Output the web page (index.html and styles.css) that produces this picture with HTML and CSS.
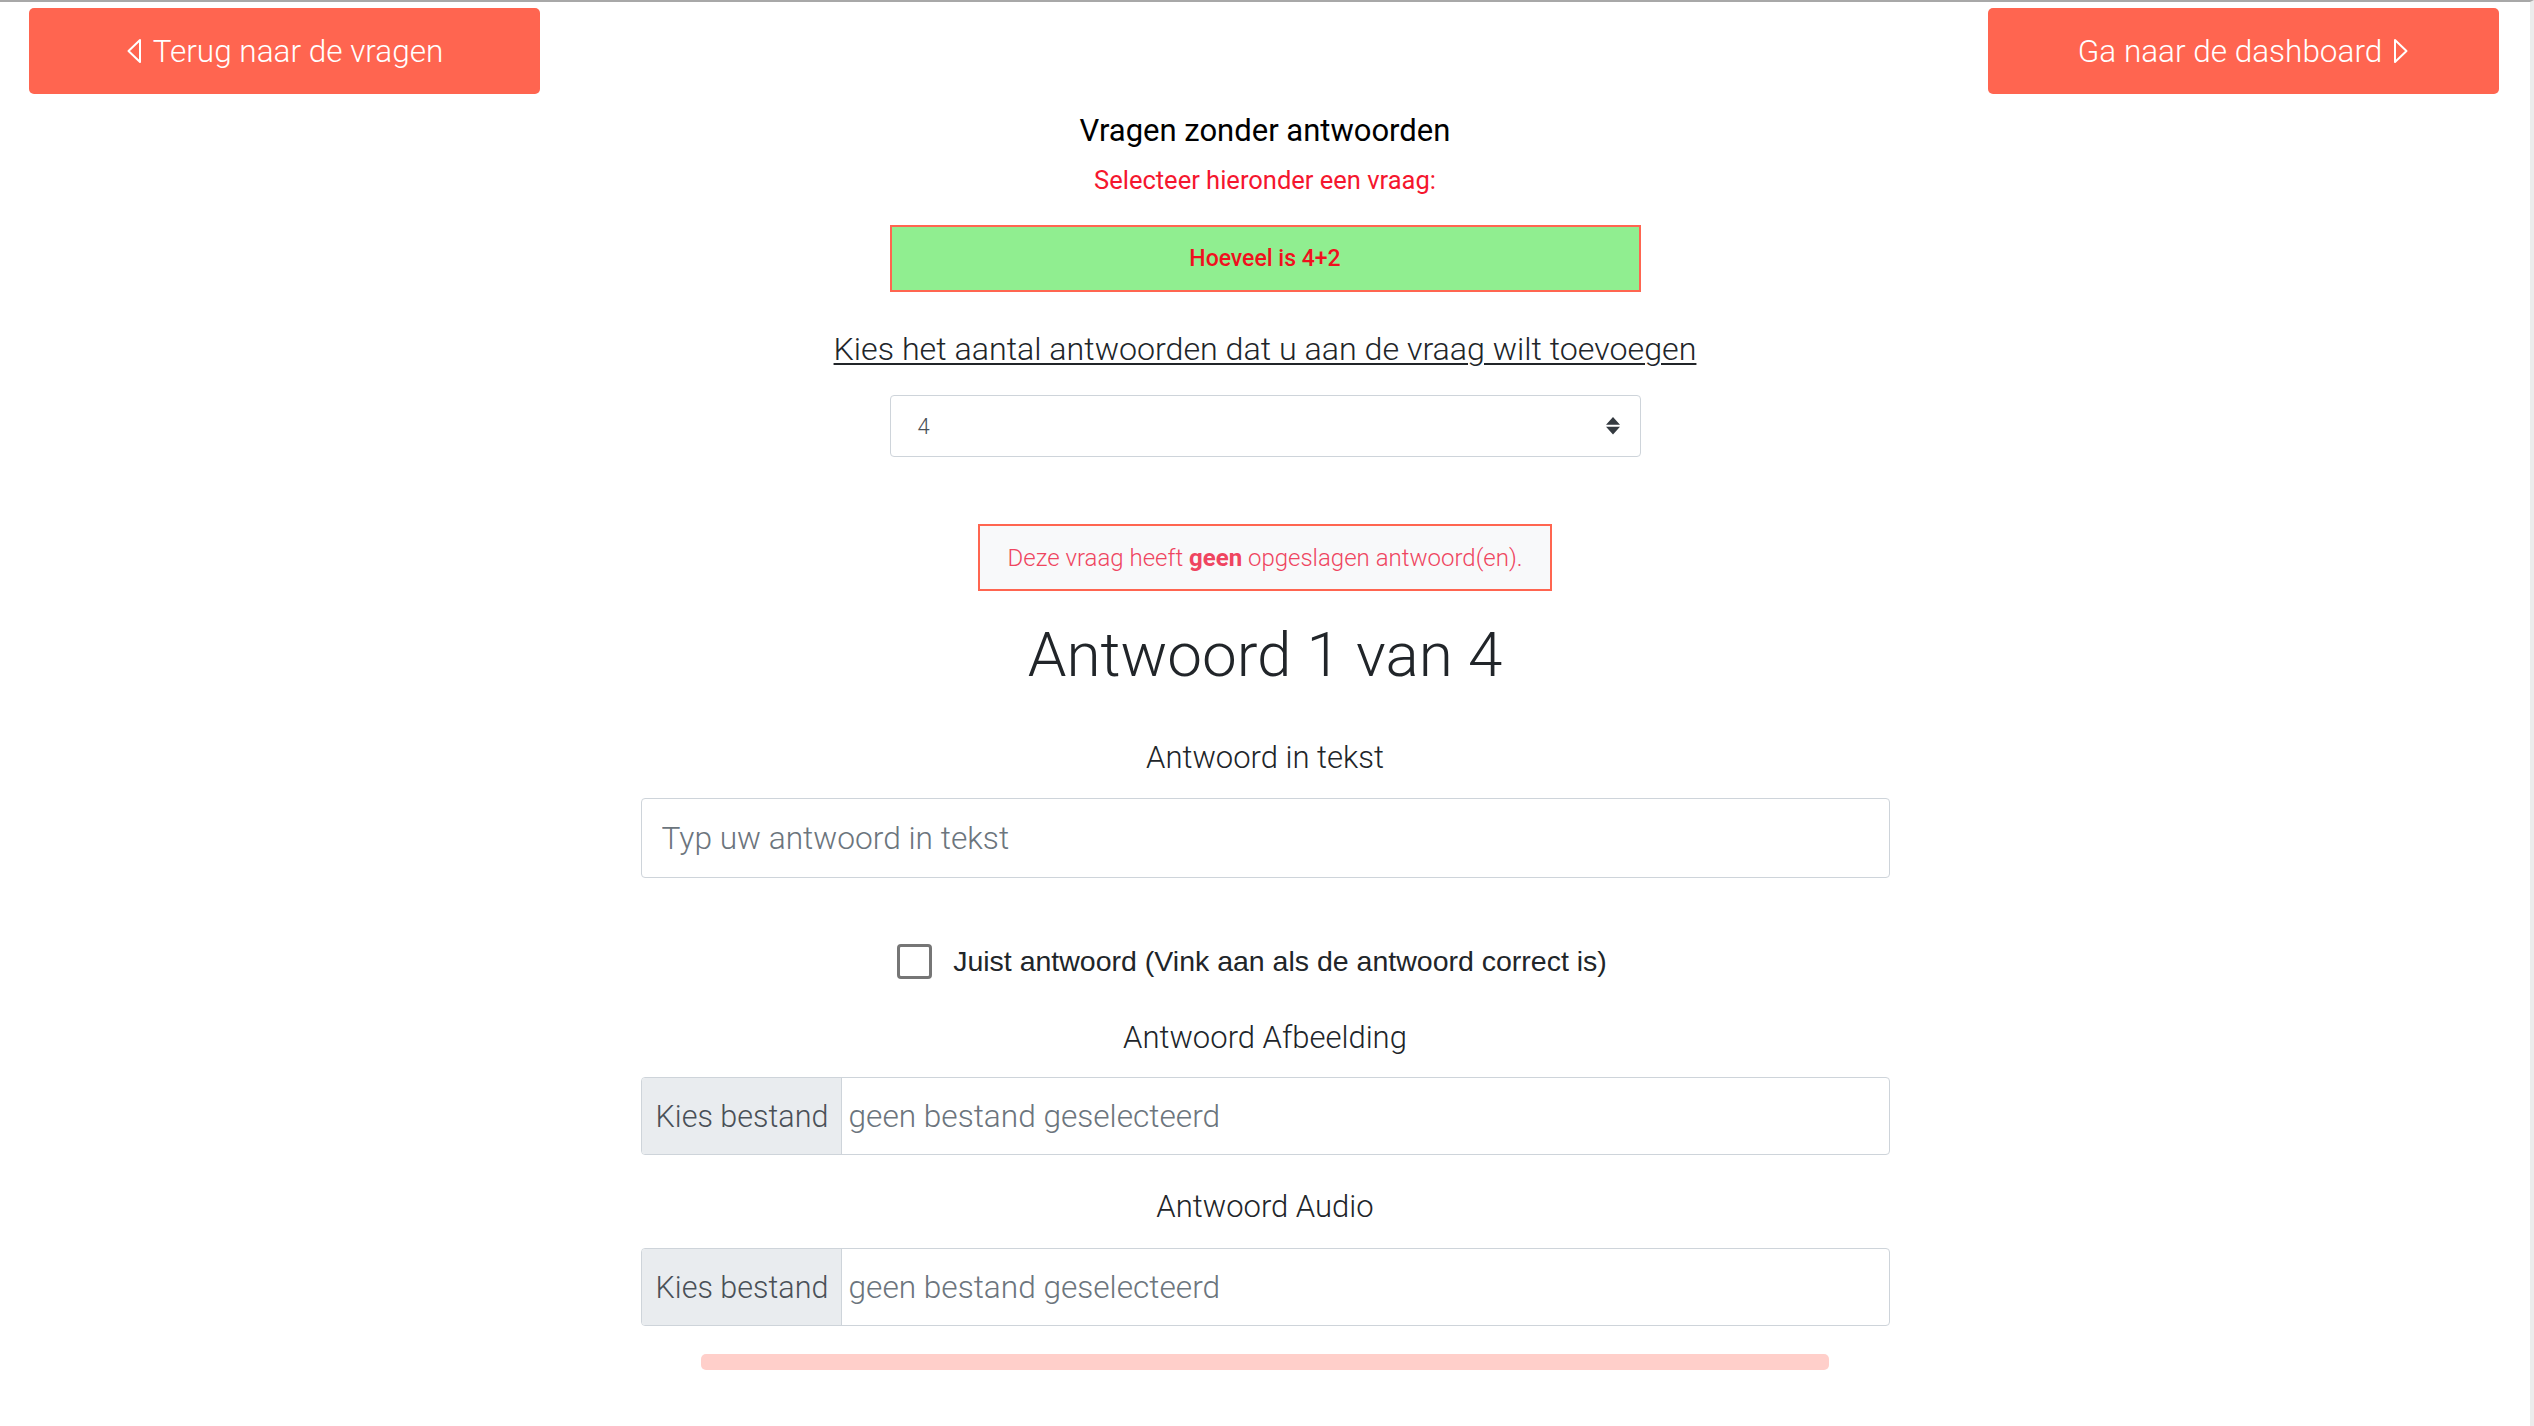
FILE: index.html
```html
<!DOCTYPE html>
<html lang="nl">
<head>
<meta charset="utf-8">
<title>Antwoorden toevoegen</title>
<link rel="stylesheet" href="styles.css">
</head>
<body>
<div class="page">
  <div class="topbar">
    <a class="btn" href="#">
      <svg class="caret" width="16" height="26" viewBox="0 0 16 26"><path d="M14 2 L2.5 13 L14 24 Z" fill="none" stroke="#fff" stroke-width="2" stroke-linejoin="round"/></svg>
      <span>Terug naar de vragen</span>
    </a>
    <a class="btn" href="#">
      <span>Ga naar de dashboard</span>
      <svg class="caret" width="16" height="26" viewBox="0 0 16 26"><path d="M2 2 L13.5 13 L2 24 Z" fill="none" stroke="#fff" stroke-width="2" stroke-linejoin="round"/></svg>
    </a>
  </div>

  <main class="content">
    <h2 class="title">Vragen zonder antwoorden</h2>
    <p class="hint">Selecteer hieronder een vraag:</p>
    <div class="question">Hoeveel is 4+2</div>

    <p class="count-label">Kies het aantal antwoorden dat u aan de vraag wilt toevoegen</p>
    <div class="select">
      <span class="select-value">4</span>
      <svg class="select-arrows" width="14" height="17.5" viewBox="0 0 4 5"><path d="M2 0L0 2.2h4zm0 5L0 2.8h4z" fill="#343a40"/></svg>
    </div>

    <div class="alert">Deze vraag heeft&nbsp;<b>geen</b>&nbsp;opgeslagen antwoord(en).</div>

    <h1 class="answer-title">Antwoord 1 van 4</h1>

    <label class="field-label">Antwoord in tekst</label>
    <input class="text-input" type="text" placeholder="Typ uw antwoord in tekst">

    <div class="check-row">
      <span class="checkbox"></span>
      <span class="check-label">Juist antwoord (Vink aan als de antwoord correct is)</span>
    </div>

    <label class="field-label label-image">Antwoord Afbeelding</label>
    <div class="file-input">
      <span class="file-btn">Kies bestand</span>
      <span class="file-name">geen bestand geselecteerd</span>
    </div>

    <label class="field-label label-audio">Antwoord Audio</label>
    <div class="file-input file-audio">
      <span class="file-btn">Kies bestand</span>
      <span class="file-name">geen bestand geselecteerd</span>
    </div>

    <div class="progress"></div>
  </main>
</div>
</body>
</html>
```

FILE: styles.css
```css
html, body {
  margin: 0;
  padding: 0;
  background: #fff;
}

body {
  font-family: "Roboto", "Liberation Sans", sans-serif;
  color: #212529;
}

.page {
  box-sizing: border-box;
  min-height: 1426px;
  border-top: 2px solid #a8a8a8;
  border-right: 4px solid #ececec;
}

.topbar {
  display: flex;
  justify-content: space-between;
  padding: 6px 31px 0 29px;
}

.btn {
  width: 511px;
  height: 86px;
  display: flex;
  align-items: center;
  justify-content: center;
  gap: 11px;
  background: #ff6550;
  color: #fff;
  border-radius: 5px;
  text-decoration: none;
  font-weight: 300;
  font-size: 31.5px;
}

.caret {
  display: block;
  flex: none;
}

.content {
  display: flex;
  flex-direction: column;
  align-items: center;
  text-align: center;
}

.title {
  margin: 17px 0 0;
  line-height: 40px;
  font-size: 31px;
  font-weight: 400;
  color: #000;
}

.hint {
  margin: 12px 0 0;
  line-height: 34px;
  font-size: 25.5px;
  font-weight: 400;
  color: #f5162e;
}

.question {
  box-sizing: border-box;
  margin-top: 28px;
  width: 751px;
  height: 67px;
  display: flex;
  align-items: center;
  justify-content: center;
  border: 2px solid #ff6550;
  background: #90ee90;
  color: #f0101e;
  font-size: 23px;
  font-weight: 500;
}

.count-label {
  margin: 37px 0 0;
  line-height: 40px;
  font-size: 32.2px;
  font-weight: 300;
  text-decoration: underline;
  text-decoration-thickness: 2px;
  text-underline-offset: 3px;
}

.select {
  box-sizing: border-box;
  margin-top: 26px;
  width: 751px;
  height: 62px;
  display: flex;
  align-items: center;
  justify-content: space-between;
  padding: 0 20px 0 27px;
  border: 1px solid #ced4da;
  border-radius: 4px;
  font-size: 22px;
  font-weight: 300;
  color: #495057;
}

.select-arrows {
  display: block;
}

.alert {
  box-sizing: border-box;
  margin-top: 67px;
  height: 67px;
  display: flex;
  align-items: center;
  padding: 0 28px;
  border: 2px solid #ff6550;
  background: #f8f9fa;
  color: #ef4560;
  font-size: 24px;
  font-weight: 300;
}

.alert b {
  font-weight: 700;
}

.answer-title {
  margin: 26px 0 0;
  line-height: 76px;
  font-size: 62px;
  font-weight: 300;
  color: #212529;
}

.field-label {
  display: block;
  margin-top: 45px;
  line-height: 40px;
  font-size: 31px;
  font-weight: 300;
  color: #212529;
}

.text-input {
  box-sizing: border-box;
  margin-top: 20px;
  width: 1249px;
  height: 80px;
  padding: 0 20px;
  border: 1px solid #ced4da;
  border-radius: 4px;
  font-family: inherit;
  font-size: 31.7px;
  font-weight: 300;
  color: #495057;
  outline: none;
}

.text-input::placeholder {
  color: #6c757d;
  opacity: 1;
}

.check-row {
  margin-top: 66px;
  margin-right: 26px;
  height: 35px;
  display: flex;
  align-items: center;
  gap: 21px;
}

.checkbox {
  box-sizing: border-box;
  width: 35px;
  height: 35px;
  border: 3px solid #767676;
  border-radius: 4px;
  background: #fff;
}

.check-label {
  font-family: "Liberation Sans", Arial, sans-serif;
  font-size: 28.5px;
  color: #212529;
}

.label-image {
  margin-top: 39px;
}

.file-input {
  box-sizing: border-box;
  margin-top: 19px;
  width: 1249px;
  height: 78px;
  display: flex;
  border: 1px solid #ced4da;
  border-radius: 4px;
  overflow: hidden;
  font-size: 30.5px;
  font-weight: 300;
}

.file-btn {
  box-sizing: border-box;
  width: 200px;
  display: flex;
  align-items: center;
  justify-content: center;
  padding-left: 2px;
  background: #e9ecef;
  border-right: 1px solid #ced4da;
  color: #495057;
}

.file-name {
  display: flex;
  align-items: center;
  padding-left: 7px;
  font-size: 31.6px;
  color: #6c757d;
}

.label-audio {
  margin-top: 32px;
}

.file-audio {
  margin-top: 21px;
}

.progress {
  margin-top: 28px;
  width: 1128px;
  height: 16px;
  border-radius: 5px;
  background: #ffcfca;
}
```
